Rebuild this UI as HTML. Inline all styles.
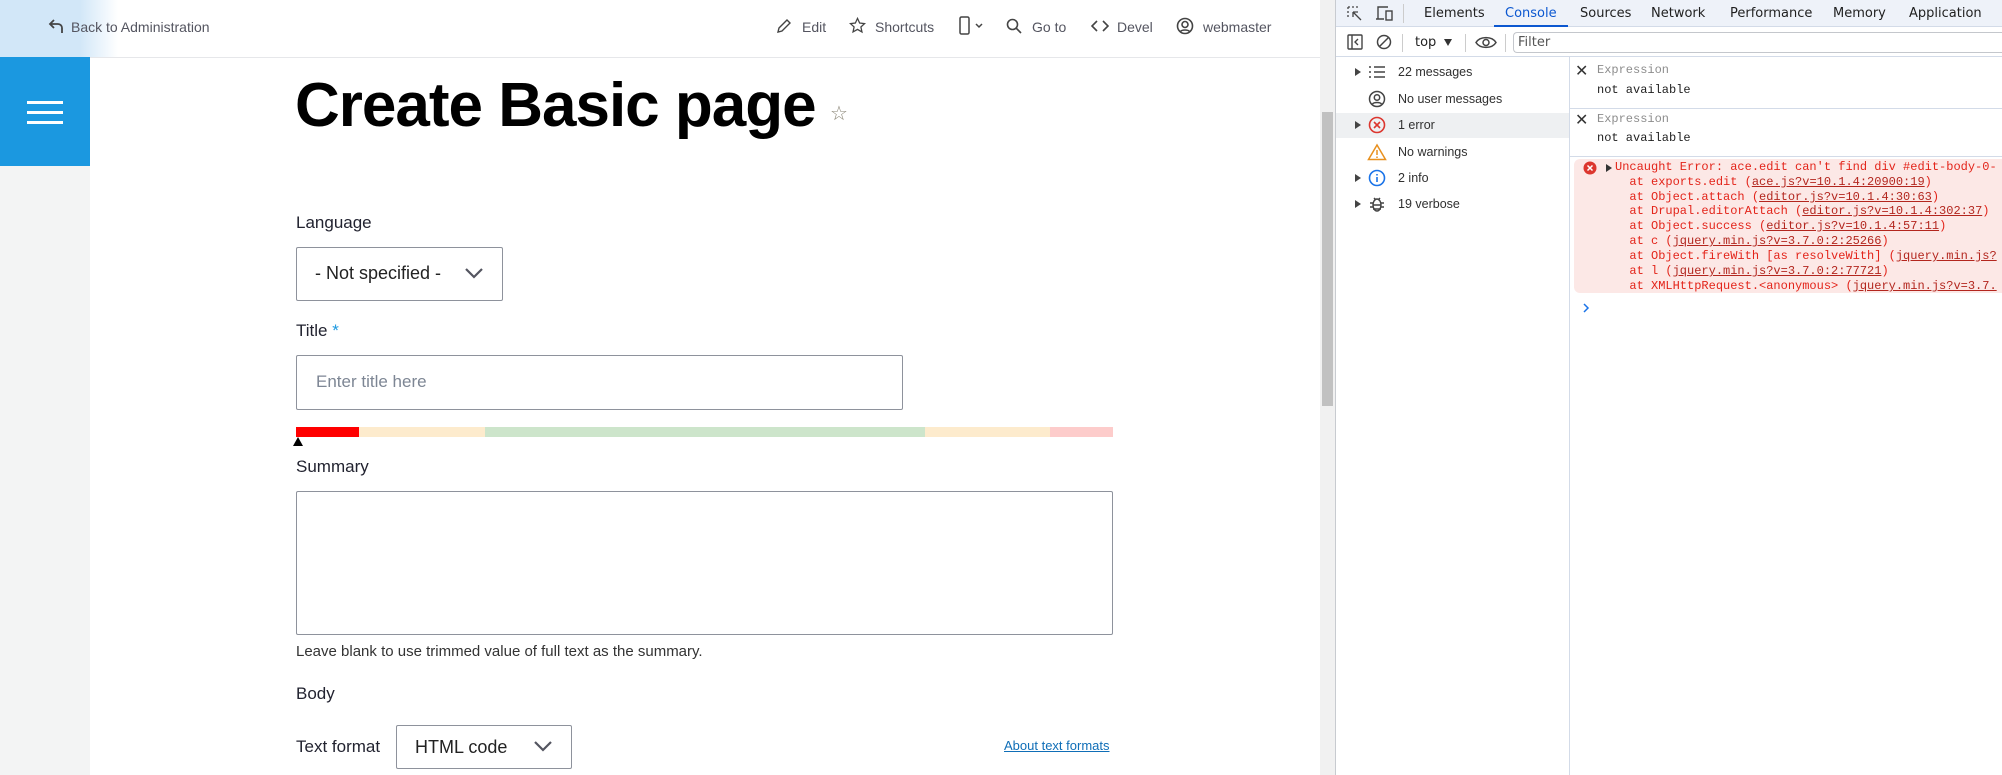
<!DOCTYPE html>
<html><head><meta charset="utf-8"><style>
*{box-sizing:border-box;margin:0;padding:0}
body{width:2002px;height:775px;overflow:hidden;position:relative;background:#fff;font-family:"Liberation Sans",sans-serif;color:#222}
.a{position:absolute}
.tb{font-size:14px;color:#545560;top:19px}
.lbl{font-size:17px;color:#222330}
.box{border:1px solid #8e929c;border-radius:2px;background:#fff}
.dt{font-family:"DejaVu Sans","Liberation Sans",sans-serif;font-size:13px;color:#1f1f1f}
.m{font-family:"Liberation Mono",monospace;font-size:12px;color:#e3241a;white-space:pre;left:1615px}
.m u{color:#b3261e}
.side{font-size:12.5px;color:#303030;left:1398px}
.arr{left:1355px;width:0;height:0;border-left:6px solid #444;border-top:4.5px solid transparent;border-bottom:4.5px solid transparent}
</style></head><body>
<div class="a" style="left:0;top:0;width:130px;height:57px;background:linear-gradient(90deg,#d2e7f8 0,#d2e7f8 80px,#fff 118px)"></div>
<div class="a" style="left:90px;top:57px;width:1230px;height:1px;background:#e6e7ea"></div>
<svg class="a" style="left:48px;top:17px" width="18" height="18" viewBox="0 0 18 18" fill="none" stroke="#444" stroke-width="1.8"><path d="M6 3L2 7l4 4M2 7h8a4 4 0 0 1 4 4v5"/></svg>
<div class="a tb" style="left:71px">Back to Administration</div>
<svg class="a" style="left:776px;top:18px" width="16" height="16" viewBox="0 0 16 16" fill="none" stroke="#444" stroke-width="1.4"><path d="M2 14l1-4 8-8 3 3-8 8z"/></svg>
<div class="a tb" style="left:802px">Edit</div>
<svg class="a" style="left:849px;top:17px" width="17" height="17" viewBox="0 0 24 24" fill="none" stroke="#444" stroke-width="1.8"><path d="M12 2l3 6.5 7 .8-5.2 4.8 1.5 7L12 17.5 5.7 21l1.5-7L2 9.3l7-.8z"/></svg>
<div class="a tb" style="left:875px">Shortcuts</div>
<svg class="a" style="left:958px;top:16px" width="30" height="20" viewBox="0 0 30 20" fill="none" stroke="#444" stroke-width="1.5"><rect x="2" y="1" width="9" height="17" rx="1.5"/><path d="M18 8l3 3 3-3"/></svg>
<svg class="a" style="left:1006px;top:18px" width="16" height="16" viewBox="0 0 16 16" fill="none" stroke="#444" stroke-width="1.6"><circle cx="6.5" cy="6.5" r="5"/><path d="M10 10l5 5"/></svg>
<div class="a tb" style="left:1032px">Go to</div>
<svg class="a" style="left:1091px;top:19px" width="18" height="14" viewBox="0 0 18 14" fill="none" stroke="#444" stroke-width="1.6"><path d="M6 2L1 7l5 5M12 2l5 5-5 5"/></svg>
<div class="a tb" style="left:1117px">Devel</div>
<svg class="a" style="left:1176px;top:17px" width="18" height="18" viewBox="0 0 18 18" fill="none" stroke="#444" stroke-width="1.6"><circle cx="9" cy="9" r="7.5"/><circle cx="9" cy="7.5" r="3"/><path d="M4.5 14.5c1.5-2 7.5-2 9 0"/></svg>
<div class="a tb" style="left:1203px">webmaster</div>
<div class="a" style="left:0;top:57px;width:90px;height:109px;background:#1b98e0"></div>
<div class="a" style="left:27px;top:101px;width:36px;height:3px;background:#fff"></div>
<div class="a" style="left:27px;top:111px;width:36px;height:3px;background:#fff"></div>
<div class="a" style="left:27px;top:121px;width:36px;height:3px;background:#fff"></div>
<div class="a" style="left:0;top:166px;width:90px;height:609px;background:#f3f4f4"></div>
<div class="a" style="left:295px;top:70px;font-size:62px;font-weight:bold;letter-spacing:-1px;color:#000">Create Basic page</div>
<div class="a" style="left:830px;top:101px;font-size:20px;color:#8b8677">☆</div>
<div class="a lbl" style="left:296px;top:213px">Language</div>
<div class="a box" style="left:296px;top:247px;width:207px;height:54px"></div>
<div class="a" style="left:315px;top:263px;font-size:18px;color:#222">- Not specified -</div>
<svg class="a" style="left:464px;top:266px" width="20" height="14" viewBox="0 0 20 14" fill="none" stroke="#545560" stroke-width="2.2"><path d="M2 3l8 8 8-8"/></svg>
<div class="a lbl" style="left:296px;top:321px">Title <span style="color:#1b98e0">*</span></div>
<div class="a box" style="left:296px;top:355px;width:607px;height:55px"></div>
<div class="a" style="left:316px;top:372px;font-size:17px;color:#7d8694">Enter title here</div>
<div class="a" style="left:296px;top:427px;width:63px;height:10px;background:#f00"></div>
<div class="a" style="left:359px;top:427px;width:126px;height:10px;background:#fdebcd"></div>
<div class="a" style="left:485px;top:427px;width:440px;height:10px;background:#cde5cb"></div>
<div class="a" style="left:925px;top:427px;width:125px;height:10px;background:#fdebcd"></div>
<div class="a" style="left:1050px;top:427px;width:63px;height:10px;background:#fdcccb"></div>
<div class="a" style="left:293px;top:437px;width:0;height:0;border-left:5px solid transparent;border-right:5px solid transparent;border-bottom:9px solid #000"></div>
<div class="a lbl" style="left:296px;top:457px">Summary</div>
<div class="a box" style="left:296px;top:491px;width:817px;height:144px"></div>
<div class="a" style="left:296px;top:643px;font-size:15px;color:#333">Leave blank to use trimmed value of full text as the summary.</div>
<div class="a lbl" style="left:296px;top:684px">Body</div>
<div class="a lbl" style="left:296px;top:737px">Text format</div>
<div class="a box" style="left:396px;top:725px;width:176px;height:44px"></div>
<div class="a" style="left:415px;top:737px;font-size:18px;color:#222">HTML code</div>
<svg class="a" style="left:533px;top:739px" width="20" height="14" viewBox="0 0 20 14" fill="none" stroke="#545560" stroke-width="2.2"><path d="M2 3l8 8 8-8"/></svg>
<div class="a" style="left:1004px;top:738px;font-size:13px;color:#0f6eb7;text-decoration:underline">About text formats</div>
<div class="a" style="left:1320px;top:0;width:16px;height:775px;background:#f1f1f1"></div>
<div class="a" style="left:1322px;top:112px;width:11px;height:294px;background:#c1c1c1"></div>
<div class="a" style="left:1335px;top:0;width:1px;height:775px;background:#c8cbd0"></div>
<div class="a" style="left:1336px;top:0;width:666px;height:27px;background:#eef2f9;border-bottom:1px solid #d3dbe8"></div>
<svg class="a" style="left:1346px;top:5px" width="18" height="18" viewBox="0 0 18 18" fill="none" stroke="#444" stroke-width="1.3"><path d="M2 2h2M6 2h2M10 2h2M2 2v2M2 6v2M2 10v2M7 7l8 8M7 7h5M7 7v5" /></svg>
<svg class="a" style="left:1375px;top:5px" width="20" height="17" viewBox="0 0 20 17" fill="none" stroke="#444" stroke-width="1.4"><path d="M3 14V2h10M1 14h8"/><rect x="11" y="6" width="6" height="9"/></svg>
<div class="a" style="left:1403px;top:4px;width:1px;height:19px;background:#ccc"></div>
<div class="a dt" style="left:1424px;top:6px">Elements</div>
<div class="a dt" style="left:1505px;top:6px;color:#0b57d0">Console</div>
<div class="a" style="left:1494px;top:25px;width:74px;height:2px;background:#0b57d0"></div>
<div class="a dt" style="left:1580px;top:6px">Sources</div>
<div class="a dt" style="left:1651px;top:6px">Network</div>
<div class="a dt" style="left:1730px;top:6px">Performance</div>
<div class="a dt" style="left:1833px;top:6px">Memory</div>
<div class="a dt" style="left:1909px;top:6px">Application</div>
<div class="a" style="left:1336px;top:28px;width:666px;height:29px;border-bottom:1px solid #d3dbe8"></div>
<svg class="a" style="left:1347px;top:34px" width="16" height="16" viewBox="0 0 16 16" fill="none" stroke="#444" stroke-width="1.4"><rect x="1" y="1" width="14" height="14" rx="1"/><path d="M5 1v14M11 5l-3 3 3 3"/></svg>
<svg class="a" style="left:1376px;top:34px" width="16" height="16" viewBox="0 0 16 16" fill="none" stroke="#444" stroke-width="1.5"><circle cx="8" cy="8" r="6.5"/><path d="M3.5 12.5l9-9"/></svg>
<div class="a" style="left:1402px;top:34px;width:1px;height:18px;background:#ccc"></div>
<div class="a dt" style="left:1415px;top:35px">top</div>
<div class="a" style="left:1444px;top:39px;border-left:4.5px solid transparent;border-right:4.5px solid transparent;border-top:7px solid #333"></div>
<div class="a" style="left:1465px;top:34px;width:1px;height:18px;background:#ccc"></div>
<svg class="a" style="left:1475px;top:35px" width="22" height="15" viewBox="0 0 22 15" fill="none" stroke="#444" stroke-width="1.5"><path d="M1 7.5C5 1 17 1 21 7.5 17 14 5 14 1 7.5z"/><circle cx="11" cy="7.5" r="3"/></svg>
<div class="a" style="left:1505px;top:34px;width:1px;height:18px;background:#ccc"></div>
<div class="a" style="left:1513px;top:32px;width:489px;height:21px;border:1px solid #c4c7cc;border-right:none;border-radius:4px 0 0 4px"></div>
<div class="a dt" style="left:1518px;top:35px;color:#555">Filter</div>
<div class="a" style="left:1569px;top:57px;width:1px;height:718px;background:#d3dbe8"></div>
<div class="a" style="left:1336px;top:113px;width:233px;height:25px;background:#eef0f2"></div>
<div class="a arr" style="top:68px"></div>
<div class="a arr" style="top:121px"></div>
<div class="a arr" style="top:174px"></div>
<div class="a arr" style="top:200px"></div>
<svg class="a" style="left:1368px;top:64px" width="18" height="16" viewBox="0 0 18 16" stroke="#444" stroke-width="1.6"><path d="M1 3h2M1 8h2M1 13h2M6 3h11M6 8h11M6 13h11"/></svg>
<svg class="a" style="left:1368px;top:90px" width="18" height="18" viewBox="0 0 18 18" fill="none" stroke="#444" stroke-width="1.5"><circle cx="9" cy="9" r="7.5"/><circle cx="9" cy="7.5" r="2.7"/><path d="M4.5 14c1.5-2 7.5-2 9 0"/></svg>
<svg class="a" style="left:1368px;top:116px" width="18" height="18" viewBox="0 0 18 18" fill="none" stroke="#dc362e" stroke-width="1.6"><circle cx="9" cy="9" r="7.5"/><path d="M6 6l6 6M12 6l-6 6"/></svg>
<svg class="a" style="left:1367px;top:143px" width="20" height="18" viewBox="0 0 20 18" fill="none" stroke="#e8901e" stroke-width="1.5"><path d="M10 2L1.5 16.5h17z"/><path d="M10 7v5M10 13.5v1.5"/></svg>
<svg class="a" style="left:1368px;top:169px" width="18" height="18" viewBox="0 0 18 18" fill="none" stroke="#1a73e8" stroke-width="1.6"><circle cx="9" cy="9" r="7.5"/><path d="M9 8v5M9 5v1.5"/></svg>
<svg class="a" style="left:1369px;top:195px" width="16" height="18" viewBox="0 0 16 18" fill="none" stroke="#444" stroke-width="1.5"><ellipse cx="8" cy="10" rx="4" ry="6"/><path d="M5 3l2 2M11 3l-2 2M1 8h3M12 8h3M1 12h3M12 12h3M4 10h8M4 14h8"/></svg>
<div class="a side" style="top:65px">22 messages</div>
<div class="a side" style="top:92px">No user messages</div>
<div class="a side" style="top:118px">1 error</div>
<div class="a side" style="top:145px">No warnings</div>
<div class="a side" style="top:171px">2 info</div>
<div class="a side" style="top:197px">19 verbose</div>
<div class="a" style="left:1575px;top:61px;font-size:16px;color:#333">✕</div>
<div class="a" style="left:1597px;top:63px;font-family:'Liberation Mono',monospace;font-size:12px;color:#8d8d8d">Expression</div>
<div class="a" style="left:1597px;top:83px;font-family:'Liberation Mono',monospace;font-size:12px;color:#1f1f1f">not available</div>
<div class="a" style="left:1570px;top:108px;width:432px;height:1px;background:#d3dbe8"></div>
<div class="a" style="left:1575px;top:110px;font-size:16px;color:#333">✕</div>
<div class="a" style="left:1597px;top:112px;font-family:'Liberation Mono',monospace;font-size:12px;color:#8d8d8d">Expression</div>
<div class="a" style="left:1597px;top:131px;font-family:'Liberation Mono',monospace;font-size:12px;color:#1f1f1f">not available</div>
<div class="a" style="left:1570px;top:156px;width:432px;height:1px;background:#d3dbe8"></div>
<div class="a" style="left:1574px;top:159px;width:440px;height:134px;background:#fce8e6;border-radius:6px"></div>
<svg class="a" style="left:1583px;top:161px" width="14" height="14" viewBox="0 0 14 14"><circle cx="7" cy="7" r="6.5" fill="#dc362e"/><path d="M4.5 4.5l5 5M9.5 4.5l-5 5" stroke="#fff" stroke-width="1.5"/></svg>
<div class="a" style="left:1606px;top:164px;border-left:6px solid #333;border-top:4.5px solid transparent;border-bottom:4.5px solid transparent"></div>
<div class="a m" style="top:160px">Uncaught Error: ace.edit can't find div #edit-body-0-</div>
<div class="a m" style="top:175px">  at exports.edit (<u>ace.js?v=10.1.4:20900:19</u>)</div>
<div class="a m" style="top:190px">  at Object.attach (<u>editor.js?v=10.1.4:30:63</u>)</div>
<div class="a m" style="top:204px">  at Drupal.editorAttach (<u>editor.js?v=10.1.4:302:37</u>)</div>
<div class="a m" style="top:219px">  at Object.success (<u>editor.js?v=10.1.4:57:11</u>)</div>
<div class="a m" style="top:234px">  at c (<u>jquery.min.js?v=3.7.0:2:25266</u>)</div>
<div class="a m" style="top:249px">  at Object.fireWith [as resolveWith] (<u>jquery.min.js?</u></div>
<div class="a m" style="top:264px">  at l (<u>jquery.min.js?v=3.7.0:2:77721</u>)</div>
<div class="a m" style="top:279px">  at XMLHttpRequest.&lt;anonymous&gt; (<u>jquery.min.js?v=3.7.</u></div>
<svg class="a" style="left:1582px;top:302px" width="8" height="12" viewBox="0 0 8 12" fill="none" stroke="#1a73e8" stroke-width="1.5"><path d="M2 2l4 4-4 4"/></svg>
</body></html>
